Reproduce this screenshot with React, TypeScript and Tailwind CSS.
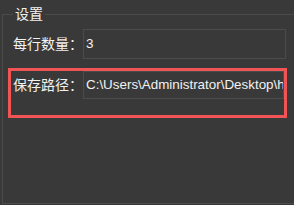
import React from 'react';

const font = "font-['Liberation_Sans','Noto_Sans_CJK_SC',sans-serif]";

export default function App() {
    return (
        <div className={`relative w-[294px] h-[205px] overflow-hidden bg-[#393939] pt-[4px] text-[#f2f2f2] ${font}`}>
            <fieldset className="ml-[2px] w-[310px] h-[200px] border border-[#4b4b4b] pl-[10px]">
                <legend className="px-[2px] text-[14px] leading-[20px]">设置</legend>

                <div className="mt-[5px] flex items-center">
                    <span className="w-[70px] shrink-0 text-[14px] leading-[20px]">每行数量：</span>
                    <div className="w-[203px] h-[30px] border border-[#4b4b4b] flex items-center px-[2px] text-[13.5px]">3</div>
                </div>

                <div className="mt-[12px] flex items-center">
                    <span className="w-[70px] shrink-0 text-[14px] leading-[20px]">保存路径：</span>
                    <div className="w-[201px] h-[28px] border border-[#4b4b4b] flex items-center pl-[2px] text-[13.4px] whitespace-nowrap overflow-hidden">
                        C:\Users\Administrator\Desktop\h
                    </div>
                </div>
            </fieldset>

            {/* annotation box */}
            <div className="absolute left-[8px] top-[68px] w-[279px] h-[50px] border-[3px] border-[#f05454]"></div>
        </div>
    );
}
